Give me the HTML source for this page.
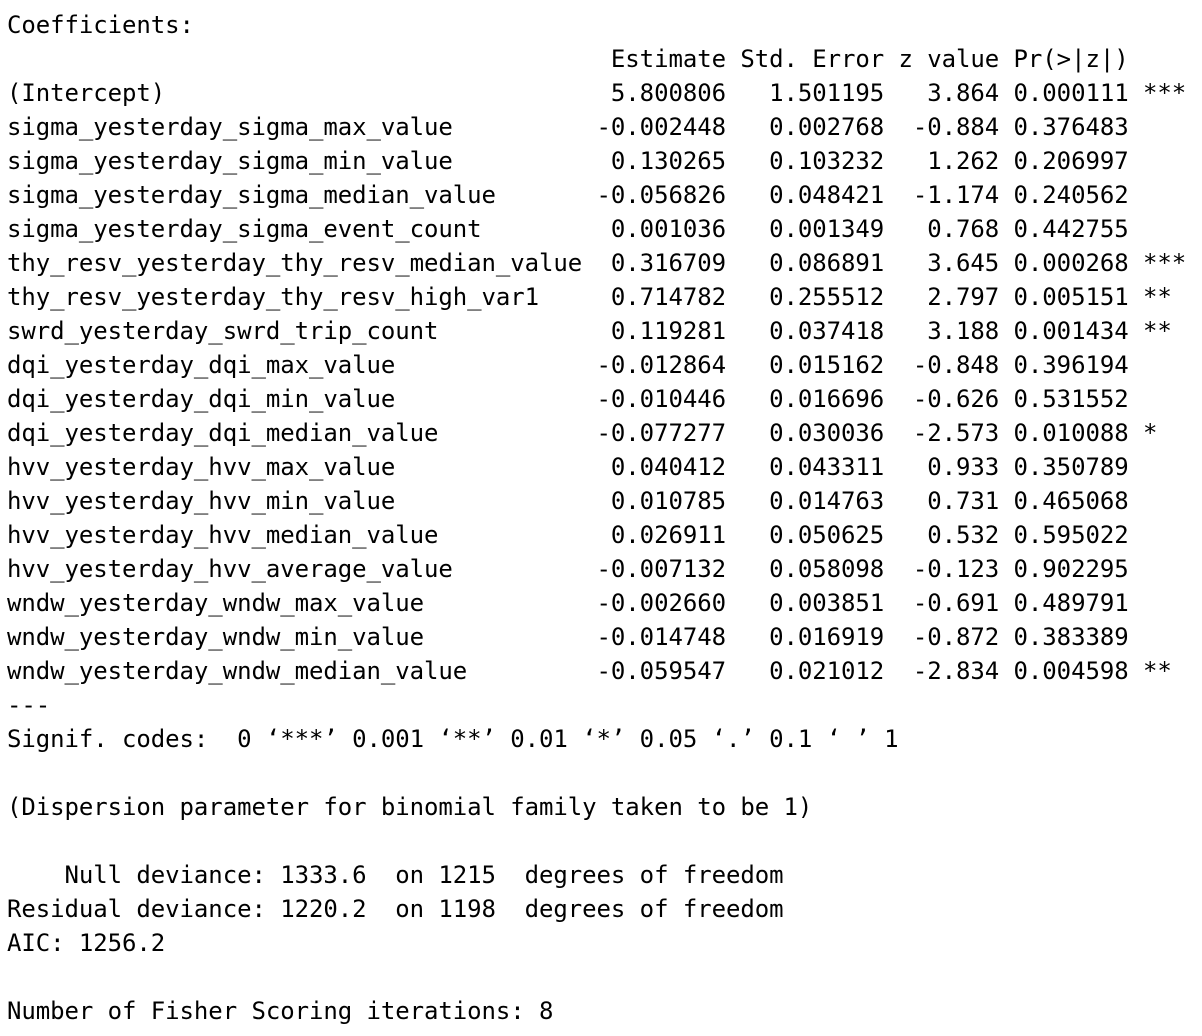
<!DOCTYPE html>
<html><head><meta charset="utf-8"><style>
html,body{margin:0;padding:0;background:#fff;width:1202px;height:1036px;overflow:hidden}
pre{margin:0;padding:8px 0 0 7px;font-family:"DejaVu Sans Mono","Liberation Mono",monospace;font-size:24px;letter-spacing:-0.07px;line-height:34px;color:#000}
</style></head><body><pre>Coefficients:
                                          Estimate Std. Error z value Pr(&gt;|z|)    
(Intercept)                               5.800806   1.501195   3.864 0.000111 ***
sigma_yesterday_sigma_max_value          -0.002448   0.002768  -0.884 0.376483    
sigma_yesterday_sigma_min_value           0.130265   0.103232   1.262 0.206997    
sigma_yesterday_sigma_median_value       -0.056826   0.048421  -1.174 0.240562    
sigma_yesterday_sigma_event_count         0.001036   0.001349   0.768 0.442755    
thy_resv_yesterday_thy_resv_median_value  0.316709   0.086891   3.645 0.000268 ***
thy_resv_yesterday_thy_resv_high_var1     0.714782   0.255512   2.797 0.005151 ** 
swrd_yesterday_swrd_trip_count            0.119281   0.037418   3.188 0.001434 ** 
dqi_yesterday_dqi_max_value              -0.012864   0.015162  -0.848 0.396194    
dqi_yesterday_dqi_min_value              -0.010446   0.016696  -0.626 0.531552    
dqi_yesterday_dqi_median_value           -0.077277   0.030036  -2.573 0.010088 *  
hvv_yesterday_hvv_max_value               0.040412   0.043311   0.933 0.350789    
hvv_yesterday_hvv_min_value               0.010785   0.014763   0.731 0.465068    
hvv_yesterday_hvv_median_value            0.026911   0.050625   0.532 0.595022    
hvv_yesterday_hvv_average_value          -0.007132   0.058098  -0.123 0.902295    
wndw_yesterday_wndw_max_value            -0.002660   0.003851  -0.691 0.489791    
wndw_yesterday_wndw_min_value            -0.014748   0.016919  -0.872 0.383389    
wndw_yesterday_wndw_median_value         -0.059547   0.021012  -2.834 0.004598 ** 
---
Signif. codes:  0 ‘***’ 0.001 ‘**’ 0.01 ‘*’ 0.05 ‘.’ 0.1 ‘ ’ 1

(Dispersion parameter for binomial family taken to be 1)

    Null deviance: 1333.6  on 1215  degrees of freedom
Residual deviance: 1220.2  on 1198  degrees of freedom
AIC: 1256.2

Number of Fisher Scoring iterations: 8
</pre></body></html>
